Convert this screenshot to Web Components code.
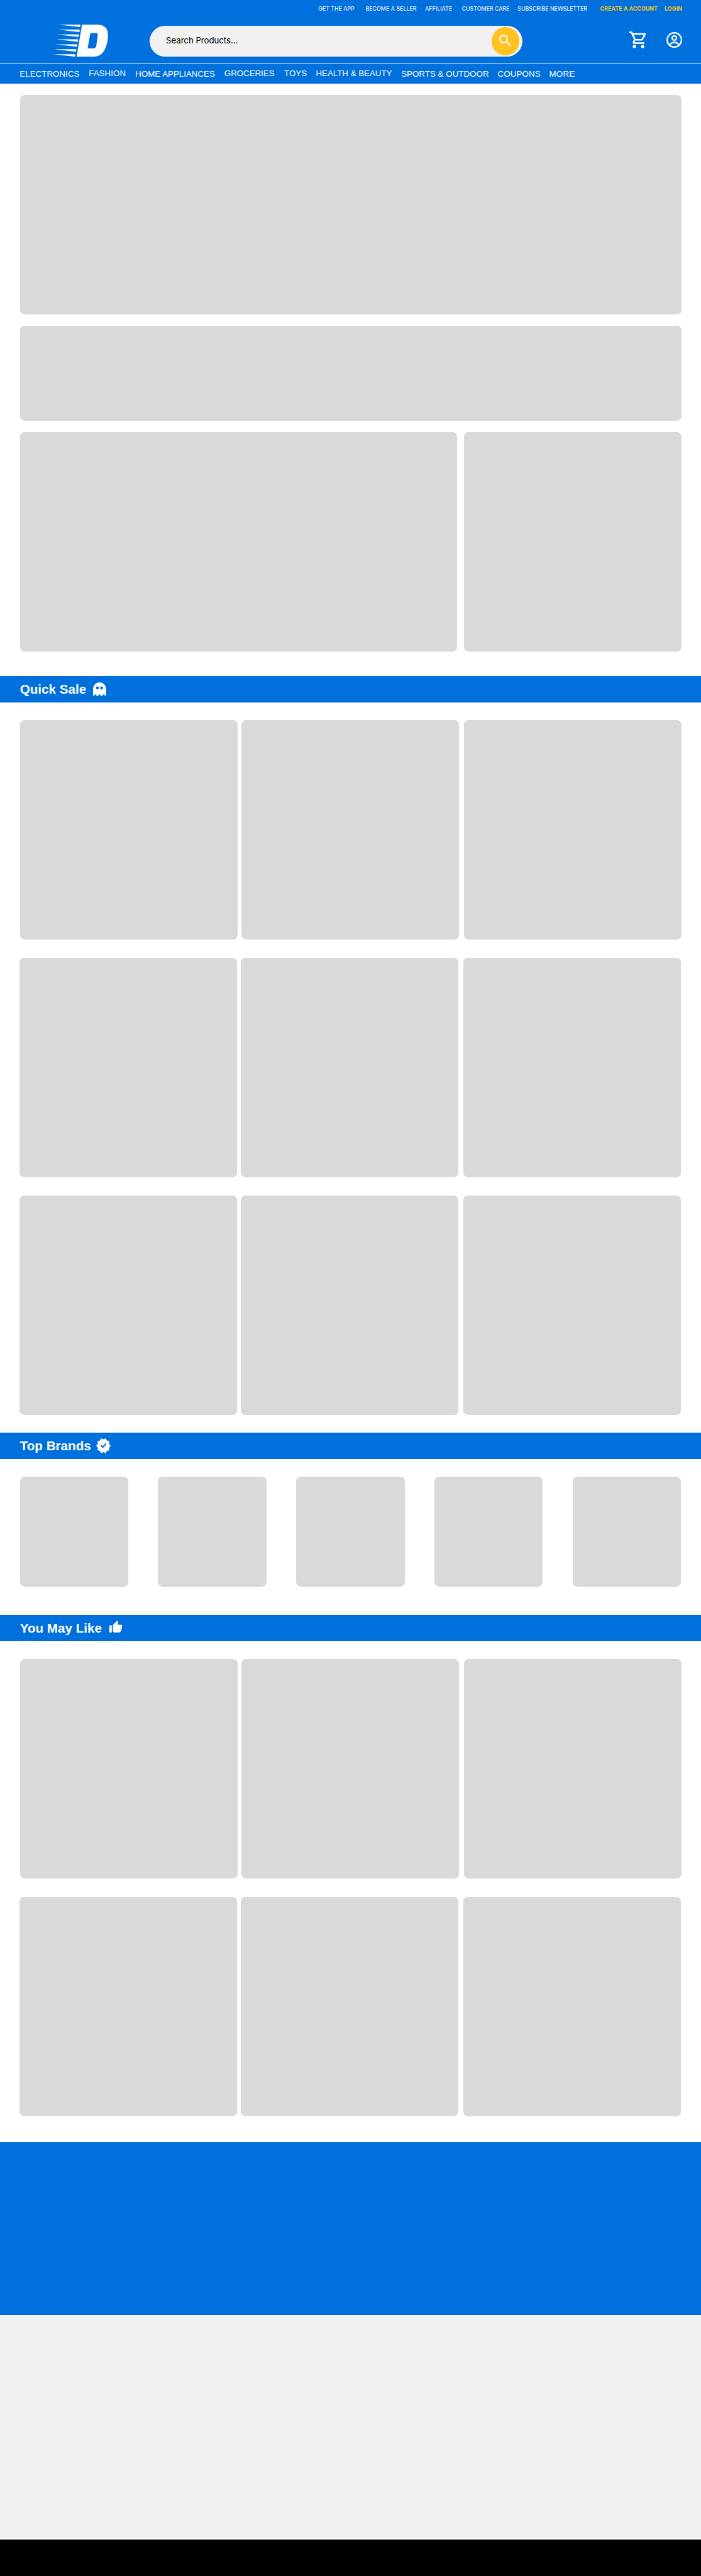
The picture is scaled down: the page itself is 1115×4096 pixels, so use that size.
<!DOCTYPE html>
<html lang="en">
<head>
<meta charset="utf-8">
<title>Store</title>
<style>
:root{--u:calc(100vw / 1512);--v:calc(100vh / 5553);--blue:#0071dc;--amber:#ffc220;--tile:#d9d9d9}
html,body{margin:0;padding:0}
body{background:#fff;font-family:"Liberation Sans",Arial,sans-serif}
</style>
</head>
<body>
<store-page></store-page>
<script>
const make = (name, html, ready) => customElements.define(name, class extends HTMLElement {
  constructor() { super(); this.attachShadow({mode: 'open'}).innerHTML = html; }
  connectedCallback() { if (ready) ready.call(this); }
});
const u = n => `calc(var(--u) * ${n})`;
const v = n => `calc(var(--v) * ${n})`;

/* A label that tracks its letters to fill the given width. */
make('fit-label', `<style>:host{display:block;flex:none;white-space:nowrap}span{display:inline-block}</style><span><slot></slot></span>`, function () {
  this.style.width = u(this.getAttribute('w'));
  this.style.marginLeft = u(this.getAttribute('gap') || 0);
  this.style.paddingTop = u(this.getAttribute('drop') || 0);
  const span = this.shadowRoot.querySelector('span');
  const target = +this.getAttribute('w') * innerWidth / 1512;
  const diff = target - span.getBoundingClientRect().width;
  span.style.letterSpacing = diff / this.textContent.length + 'px';
});

make('grey-tile', `<style>:host{display:block;flex:none;background:var(--tile);border-radius:calc(var(--u)*10)}</style>`, function () {
  this.style.width = u(this.getAttribute('w'));
  this.style.height = v(this.getAttribute('h') || 473);
  this.style.marginLeft = u(this.getAttribute('gap') || 0);
});

make('tile-row', `<style>:host{display:flex;padding-left:calc(var(--u)*43)}:host([shift]){padding-left:calc(var(--u)*42)}</style><slot></slot>`, function () {
  this.style.marginTop = v(this.getAttribute('top'));
});

make('product-row', `<style>:host{display:flow-root}</style><tile-row><grey-tile w="469"></grey-tile><grey-tile w="469" gap="9"></grey-tile><grey-tile w="469" gap="11"></grey-tile></tile-row>`, function () {
  const row = this.shadowRoot.querySelector('tile-row');
  row.style.marginTop = v(this.getAttribute('top'));
  row.toggleAttribute('shift', this.hasAttribute('shift'));
});

make('section-band', `<style>
:host{display:flex;align-items:flex-start;height:calc(var(--v)*56);background:var(--blue);color:#fff;padding-left:calc(var(--u)*43)}
h2{margin:0;font-weight:700;font-size:calc(var(--u)*28);line-height:calc(var(--u)*56.6);white-space:nowrap}
</style><h2><slot></slot></h2><slot name="icon"></slot>`, function () {
  this.style.marginTop = v(this.getAttribute('top'));
  this.shadowRoot.querySelector('h2').style.width = u(this.getAttribute('w'));
  const icon = this.querySelector('svg');
  icon.style.cssText = `display:block;width:${u(icon.getAttribute('data-w'))};height:${u(icon.getAttribute('data-h'))};margin-top:${u(icon.getAttribute('data-y'))}`;
});

make('top-links', `<style>
:host{display:flex;height:calc(var(--u)*55);padding-left:calc(var(--u)*686.5);font:400 calc(var(--u)*12)/calc(var(--u)*39.2) Inter,sans-serif;color:#fff}
.b{font-weight:700;color:var(--amber)}
</style>
<fit-label w="78">GET THE APP</fit-label><fit-label w="110" gap="24">BECOME A SELLER</fit-label><fit-label w="58" gap="18.5">AFFILIATE</fit-label><fit-label w="103" gap="21">CUSTOMER CARE</fit-label><fit-label w="150" gap="17.5">SUBSCRIBE NEWSLETTER</fit-label><fit-label class="b" w="124" gap="28">CREATE A ACCOUNT</fit-label><fit-label class="b" w="38.5" gap="14.8">LOGIN</fit-label>`);

make('brand-logo', `<style>:host{display:block;flex:none}svg{display:block;width:calc(var(--u)*118);height:calc(var(--u)*70)}</style>
<svg viewBox="47 38 354 210" fill="#fff"><path d="M82 39H222L220 54ZM76 71H217L215 87ZM70 102H212L210 118ZM65 134H207L205 150ZM59 166H201L199 181ZM53 198H195L193 214ZM48 230H189L187 246Z"/><path fill-rule="evenodd" d="M232 39H330C378 39 400 62 400 108C398 150 390 185 371 213C355 236 335 246 300 246H197ZM286 93L268 193H304Q322 192 325 172L334 106Q335 93 322 93Z"/></svg>`);

make('search-box', `<style>
:host{display:flex;flex:none;justify-content:space-between;align-items:flex-start;box-sizing:border-box;width:calc(var(--u)*804);height:calc(var(--u)*67);background:#f1f1f1;border-radius:calc(var(--u)*34);padding:0 calc(var(--u)*7) 0 calc(var(--u)*35)}
div{font:400 calc(var(--u)*18)/calc(var(--u)*63) Inter,sans-serif;color:#000}
.go{display:flow-root;width:calc(var(--u)*60);height:calc(var(--u)*60);margin-top:calc(var(--u)*4);border-radius:50%;background:var(--amber)}
svg{display:block;width:calc(var(--u)*25.5);height:calc(var(--u)*25.5);margin:calc(var(--u)*16) 0 0 calc(var(--u)*16.8)}
</style><div><fit-label w="155">Search Products...</fit-label></div>
<div class="go" role="button" aria-label="Search"><svg viewBox="3 3 17.49 17.49" fill="#fff"><path d="M15.5 14h-.79l-.28-.27A6.471 6.471 0 0 0 16 9.5 6.5 6.5 0 1 0 9.5 16c1.61 0 3.09-.59 4.23-1.57l.27.28v.79l5 4.99L20.49 19l-4.99-5zm-6 0C7.01 14 5 11.99 5 9.5S7.01 5 9.5 5 14 7.01 14 9.5 11.99 14 9.5 14z"/></svg></div>`);

make('header-icons', `<style>:host{display:flex;flex:none}svg{display:block}.c{width:calc(var(--u)*36);height:calc(var(--u)*36);margin-top:calc(var(--u)*13)}.a{width:calc(var(--u)*34);height:calc(var(--u)*34);margin:calc(var(--u)*14) 0 0 calc(var(--u)*44)}</style>
<svg class="c" viewBox="1 2 20 20" fill="#fff"><path d="M15.55 13c.75 0 1.41-.41 1.75-1.03l3.58-6.49A.996.996 0 0 0 20.01 4H5.21l-.94-2H1v2h2l3.6 7.59-1.35 2.44C4.52 15.37 5.48 17 7 17h12v-2H7l1.1-2h7.45zM6.16 6h12.15l-2.76 5H8.53L6.16 6zM7 18c-1.1 0-1.99.9-1.99 2S5.9 22 7 22s2-.9 2-2-.9-2-2-2zm10 0c-1.1 0-1.99.9-1.99 2s.89 2 1.99 2 2-.9 2-2-.9-2-2-2z"/></svg>
<svg class="a" viewBox="0 0 100 100" fill="none" stroke="#fff" stroke-width="9"><circle cx="50" cy="50" r="45.5"/><circle cx="50" cy="38" r="14"/><path d="M19 83C27 71 38 65 50 65S73 71 81 83"/></svg>`);

make('nav-bar', `<style>:host{display:flex;border-top:calc(var(--u)*1.36) solid #fff;box-sizing:border-box;height:calc(var(--u)*43);padding-left:calc(var(--u)*42.5);font-size:calc(var(--u)*18);line-height:calc(var(--u)*41.6);color:#fff}</style>
<fit-label w="129" drop="1">ELECTRONICS</fit-label><fit-label w="80" gap="20">FASHION</fit-label><fit-label w="171.5" gap="20.5" drop="1">HOME APPLIANCES</fit-label><fit-label w="108" gap="20.5">GROCERIES</fit-label><fit-label w="49" gap="21">TOYS</fit-label><fit-label w="164" gap="19.5">HEALTH &amp; BEAUTY</fit-label><fit-label w="189" gap="20" drop="1">SPORTS &amp; OUTDOOR</fit-label><fit-label w="92.5" gap="19" drop="1">COUPONS</fit-label><fit-label w="56" gap="18.5" drop="1">MORE</fit-label>`);

make('store-header', `<style>:host{display:block;height:calc(var(--v)*180);background:var(--blue)}
.row{display:flex;height:calc(var(--u)*82);padding-left:calc(var(--u)*115.7);align-items:flex-start}
brand-logo{margin-top:calc(var(--u)*-2.4)}search-box{margin-left:calc(var(--u)*89.3)}header-icons{margin-left:calc(var(--u)*230)}</style>
<top-links></top-links><div class="row"><brand-logo></brand-logo><search-box></search-box><header-icons></header-icons></div><nav-bar></nav-bar>`);

make('store-footer', `<style>:host{display:block}
.a{height:calc(var(--v)*373);background:var(--blue)}.b{height:calc(var(--v)*481);background:#f1f1f1}.c{height:calc(var(--v)*80);margin-top:calc(var(--v)*2);background:#000}</style><div class="a"></div><div class="b"></div><div class="c"></div>`);

make('store-page', `<style>:host{display:flex;flex-direction:column;height:100vh;overflow:hidden}:host>*{flex:none}store-footer{margin-top:calc(var(--v)*56)}</style>
<store-header></store-header>
<tile-row top="25"><grey-tile w="1427"></grey-tile></tile-row>
<tile-row top="24"><grey-tile w="1427" h="205"></grey-tile></tile-row>
<tile-row top="24"><grey-tile w="943"></grey-tile><grey-tile w="469" gap="15"></grey-tile></tile-row>
<section-band top="54" w="158">Quick Sale<svg slot="icon" data-w="28" data-h="30" data-y="13" viewBox="0 0 28 30" fill="#fff"><path fill-rule="evenodd" d="M0 30V13.5A14 13.5 0 0 1 28 13.5V30L23 25.7 18.6 30 13.8 25.7 9.3 30 4.8 25.7ZM6.1 12a3.2 3.2 0 1 0 6.4 0a3.2 3.2 0 1 0 -6.4 0ZM15.2 12a3.2 3.2 0 1 0 6.4 0a3.2 3.2 0 1 0 -6.4 0Z"/></svg></section-band>
<product-row top="39"></product-row>
<product-row top="39" shift></product-row>
<product-row top="39" shift></product-row>
<section-band top="39" w="164.4">Top Brands<svg slot="icon" data-w="31.3" data-h="32" data-y="12" viewBox="40 -900 880 840" preserveAspectRatio="none" fill="#fff"><path d="m344-60-76-128-144-32 14-148-98-112 98-112-14-148 144-32 76-128 136 58 136-58 76 128 144 32-14 148 98 112-98 112 14 148-144 32-76 128-136-58-136 58Zm94-278 226-226-56-58-170 170-86-84-56 56 142 142Z"/></svg></section-band>
<tile-row top="39"><grey-tile w="234" h="236"></grey-tile><grey-tile w="234" h="236" gap="64"></grey-tile><grey-tile w="234" h="236" gap="64"></grey-tile><grey-tile w="234" h="236" gap="64"></grey-tile><grey-tile w="234" h="236" gap="64"></grey-tile></tile-row>
<section-band top="61" w="192.3">You May Like<svg slot="icon" data-w="28" data-h="25.4" data-y="13.2" viewBox="1 1 22 20" fill="#fff"><path d="M1 21h4V9H1v12zm22-11c0-1.1-.9-2-2-2h-6.31l.95-4.57.03-.32c0-.41-.17-.79-.44-1.06L14.17 1 7.59 7.59C7.22 7.95 7 8.45 7 9v10c0 1.1.9 2 2 2h9c.83 0 1.54-.5 1.84-1.22l3.02-7.05c.09-.23.14-.47.14-.73v-2z"/></svg></section-band>
<product-row top="40"></product-row>
<product-row top="39" shift></product-row>
<store-footer></store-footer>`);
</script>
</body>
</html>
